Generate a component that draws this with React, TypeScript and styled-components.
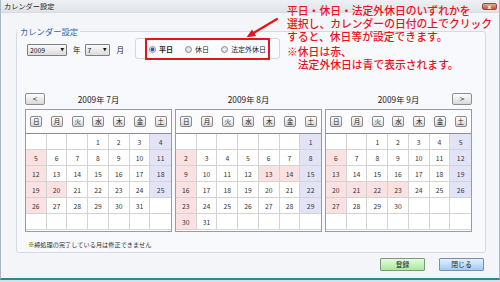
import React from "react";
import styled, { createGlobalStyle } from "styled-components";

const GlobalStyle = createGlobalStyle`
  html, body {
    margin: 0;
    padding: 0;
  }
  body {
    width: 500px;
    height: 282px;
    overflow: hidden;
    background: #d6dfe7;
    font-family: "Noto Sans CJK JP", "Noto Sans", sans-serif;
    color: #222;
  }
`;

type DayKind = "normal" | "holiday" | "saturday";

interface ICell {
  day?: number;
  kind: DayKind;
}

interface IMonth {
  label: string;
  startDow: number;
  days: number;
  holidays: number[];
}

const MONTHS: IMonth[] = [
  { label: "2009年 7月", startDow: 3, days: 31, holidays: [20] },
  { label: "2009年 8月", startDow: 6, days: 31, holidays: [13, 14] },
  { label: "2009年 9月", startDow: 2, days: 30, holidays: [21, 22, 23] },
];

const WEEKDAYS = ["日", "月", "火", "水", "木", "金", "土"];

const buildCells = (month: IMonth): ICell[] => {
  const cells: ICell[] = [];
  for (let i = 0; i < 42; i++) {
    const day = i - month.startDow + 1;
    if (day < 1 || day > month.days) {
      cells.push({ kind: "normal" });
      continue;
    }
    const dow = i % 7;
    let kind: DayKind = "normal";
    if (dow === 0 || month.holidays.includes(day)) kind = "holiday";
    else if (dow === 6) kind = "saturday";
    cells.push({ day, kind });
  }
  return cells;
};

const Calendar = ({ month, prev, next }: { month: IMonth; prev?: boolean; next?: boolean }) => (
  <MonthColumn>
    <MonthNav>
      {prev && <NavButton $side="left">&lt;</NavButton>}
      <MonthTitle>{month.label}</MonthTitle>
      {next && <NavButton $side="right">&gt;</NavButton>}
    </MonthNav>
    <CalendarBox>
      <WeekHeader>
        {WEEKDAYS.map((w) => (
          <WeekSlot key={w}>
            <WeekButton>{w}</WeekButton>
          </WeekSlot>
        ))}
      </WeekHeader>
      <DayGrid>
        {buildCells(month).map((c, i) => (
          <DayCell key={i} $kind={c.day ? c.kind : "normal"} $last={i % 7 === 6}>
            {c.day ?? ""}
          </DayCell>
        ))}
      </DayGrid>
    </CalendarBox>
  </MonthColumn>
);

export default function App() {
  return (
    <>
      <GlobalStyle />
      <Window>
        <TitleBar>
          <TitleText>カレンダー設定</TitleText>
          <CloseButton>x</CloseButton>
        </TitleBar>
        <Body>
          <GroupBox>
            <GroupLegend>カレンダー設定</GroupLegend>
            <ControlsRow>
              <SelectBox $width={40}>
                <span>2009</span>
                <SelectArrow>▼</SelectArrow>
              </SelectBox>
              <UnitLabel $gap={6}>年</UnitLabel>
              <SelectBox $width={25} $gap={4}>
                <span>7</span>
                <SelectArrow>▼</SelectArrow>
              </SelectBox>
              <UnitLabel $gap={7}>月</UnitLabel>
              <RadioPanel>
                <RadioGroup>
                  <RadioItem>
                    <RadioDot $checked />
                    <RadioLabel $checked>平日</RadioLabel>
                  </RadioItem>
                  <RadioItem>
                    <RadioDot />
                    <RadioLabel>休日</RadioLabel>
                  </RadioItem>
                  <RadioItem>
                    <RadioDot />
                    <RadioLabel>法定外休日</RadioLabel>
                  </RadioItem>
                </RadioGroup>
              </RadioPanel>
            </ControlsRow>
            <CalendarRow>
              {MONTHS.map((m, i) => (
                <Calendar key={m.label} month={m} prev={i === 0} next={i === MONTHS.length - 1} />
              ))}
            </CalendarRow>
            <Note>※締処理の完了している月は修正できません</Note>
          </GroupBox>
          <Footer>
            <FooterButton $tone="green">登録</FooterButton>
            <FooterButton $tone="blue">閉じる</FooterButton>
          </Footer>
        </Body>

        <Arrow width="42" height="28" viewBox="0 0 42 28">
          <line x1="36" y1="5" x2="12.5" y2="19" stroke="#e8141c" strokeWidth="2.2" strokeLinecap="round" />
          <polygon points="5.5,23.3 15,22 11,15.4" fill="#e8141c" />
        </Arrow>
        <Annotation>
          <AnnoLine>平日・休日・法定外休日のいずれかを</AnnoLine>
          <AnnoLine>選択し、カレンダーの日付の上でクリック</AnnoLine>
          <AnnoLine>すると、休日等が設定できます。</AnnoLine>
          <AnnoLine $gapTop>※休日は赤、</AnnoLine>
          <AnnoLine>　法定外休日は青で表示されます。</AnnoLine>
        </Annotation>
      </Window>
    </>
  );
}

const Window = styled.div`
  position: relative;
  width: 500px;
  height: 280px;
  box-sizing: border-box;
  display: flex;
  flex-direction: column;
  background: #f4f5f9;
  border-left: 1px solid #a9b9c8;
  border-right: 1px solid #a9b9c8;
  border-bottom: 2px solid #2f8797;
`;

const TitleBar = styled.div`
  height: 13px;
  flex: none;
  display: flex;
  align-items: center;
  justify-content: space-between;
  padding: 0 2px 0 3px;
  background: linear-gradient(#eef0f3, #e0e3e8);
  border-bottom: 1px solid #d8dbe0;
  box-sizing: border-box;
`;

const TitleText = styled.span`
  font-size: 7.2px;
  line-height: 9px;
  color: #1e1e1e;
`;

const CloseButton = styled.span`
  width: 15px;
  height: 7px;
  box-sizing: border-box;
  border: 1px solid #9a4a40;
  border-radius: 2px;
  background: linear-gradient(#eba596, #c5503c);
  color: #fff;
  font-family: "DejaVu Sans", sans-serif;
  font-size: 6px;
  line-height: 5px;
  text-align: center;
  font-weight: bold;
`;

const Body = styled.div`
  flex: 1;
  display: flex;
  flex-direction: column;
  padding: 12px 13px 0 15px;
`;

const GroupBox = styled.fieldset`
  margin: 0;
  min-width: 0;
  padding: 1px 12px 3px 8px;
  border: 1px solid #d5d9e1;
  border-radius: 3px;
  background: #f8f9fc;
`;

const GroupLegend = styled.legend`
  margin-left: -7px;
  padding: 0 2px;
  font-size: 8.3px;
  line-height: 12px;
  color: #2f62b4;
`;

const ControlsRow = styled.div`
  display: flex;
  align-items: center;
  height: 21px;
  padding-left: 2px;
`;

const SelectBox = styled.div<{ $width: number; $gap?: number }>`
  width: ${(p) => p.$width}px;
  height: 12px;
  margin-top: 3px;
  margin-left: ${(p) => p.$gap ?? 0}px;
  box-sizing: border-box;
  display: flex;
  align-items: center;
  justify-content: space-between;
  padding: 0 2px 0 2px;
  border: 1px solid #7d7d7d;
  border-radius: 1px;
  background: linear-gradient(#fafafa, #dcdcdc);
  font-size: 6.8px;
  line-height: 10px;
  color: #111;
`;

const SelectArrow = styled.span`
  font-family: "DejaVu Sans", sans-serif;
  font-size: 4.5px;
  color: #111;
`;

const UnitLabel = styled.span<{ $gap: number }>`
  margin-left: ${(p) => p.$gap}px;
  margin-top: 2px;
  font-size: 7.5px;
  line-height: 10px;
  color: #222;
`;

const RadioPanel = styled.div`
  margin-left: 11px;
  width: 145px;
  height: 21px;
  box-sizing: border-box;
  display: flex;
  padding-left: 9px;
  border: 1px solid #d3d7de;
  border-radius: 3px;
  background: #fafbfd;
`;

const RadioGroup = styled.div`
  display: flex;
  align-items: center;
  gap: 12px;
  margin: -1px 0 -2px;
  padding: 0 2px;
  border: 2px solid #e8141c;
`;

const RadioItem = styled.label`
  display: flex;
  align-items: center;
  gap: 3px;
`;

const RadioDot = styled.span<{ $checked?: boolean }>`
  width: 7px;
  height: 7px;
  box-sizing: border-box;
  border-radius: 50%;
  border: 1px solid #8c8c8c;
  background: ${(p) =>
    p.$checked
      ? "radial-gradient(circle, #2a5fbf 0, #2a5fbf 1.6px, #e9eef6 2.2px)"
      : "radial-gradient(circle, #f4f4f4, #cfcfcf)"};
`;

const RadioLabel = styled.span<{ $checked?: boolean }>`
  font-size: 7px;
  line-height: 10px;
  font-weight: ${(p) => (p.$checked ? 700 : 400)};
  color: #1a1a1a;
`;

const CalendarRow = styled.div`
  margin-top: 34px;
  display: grid;
  grid-template-columns: repeat(3, 147px);
  column-gap: 3px;
`;

const MonthColumn = styled.div`
  display: flex;
  flex-direction: column;
`;

const MonthNav = styled.div`
  height: 12px;
  display: grid;
  grid-template-columns: 20px 1fr 20px;
  align-items: center;
`;

const MonthTitle = styled.span`
  grid-column: 2;
  text-align: center;
  font-size: 8.3px;
  line-height: 12px;
  color: #222;
`;

const NavButton = styled.span<{ $side: "left" | "right" }>`
  grid-column: ${(p) => (p.$side === "left" ? 1 : 3)};
  grid-row: 1;
  height: 12px;
  box-sizing: border-box;
  border: 1px solid #8e8e8e;
  border-radius: 2px;
  background: linear-gradient(#fdfdfd, #d9d9d9);
  font-family: "DejaVu Sans", sans-serif;
  font-size: 6.5px;
  line-height: 10px;
  text-align: center;
  color: #222;
`;

const CalendarBox = styled.div`
  margin-top: 4px;
  border: 1px solid #9b9b9b;
  padding-bottom: 1px;
  background: #fff;
`;

const WeekHeader = styled.div`
  height: 23px;
  display: grid;
  grid-template-columns: repeat(7, 1fr);
  align-items: center;
  border-bottom: 1px solid #8d8d8d;
  background: #fbfbfd;
`;

const WeekSlot = styled.div`
  display: flex;
  justify-content: center;
`;

const WeekButton = styled.span`
  width: 12px;
  height: 11px;
  box-sizing: border-box;
  border: 1px solid #8a8a8a;
  border-radius: 2px;
  background: linear-gradient(#ffffff, #d6d6d6);
  font-size: 6.5px;
  line-height: 9px;
  text-align: center;
  color: #222;
`;

const DayGrid = styled.div`
  display: grid;
  grid-template-columns: repeat(7, 1fr);
  grid-auto-rows: 16px;
`;

const CELL_BG: Record<DayKind, string> = {
  normal: "#ffffff",
  holiday: "#fbe1e1",
  saturday: "#e3e3f7",
};

const DayCell = styled.div<{ $kind: DayKind; $last: boolean }>`
  display: flex;
  align-items: center;
  justify-content: center;
  box-sizing: border-box;
  border-bottom: 1px solid #d3d3d3;
  border-right: ${(p) => (p.$last ? "none" : "1px solid #d3d3d3")};
  background: ${(p) => CELL_BG[p.$kind]};
  font-size: 6.8px;
  color: #333;
`;

const Note = styled.div`
  margin-top: 8px;
  padding-left: 3px;
  font-size: 6.2px;
  line-height: 9px;
  color: #333;
`;

const Footer = styled.div`
  display: flex;
  justify-content: flex-end;
  gap: 14px;
  margin-top: 5px;
  padding-right: 2px;
`;

const FooterButton = styled.span<{ $tone: "green" | "blue" }>`
  width: 45px;
  height: 13px;
  box-sizing: border-box;
  border: 1px solid ${(p) => (p.$tone === "green" ? "#7a9a7a" : "#7b8fa8")};
  border-radius: 1px;
  background: ${(p) =>
    p.$tone === "green"
      ? "linear-gradient(#e6fadf, #a9e99a)"
      : "linear-gradient(#e2f0ff, #9fcbf4)"};
  font-size: 6.8px;
  line-height: 11px;
  text-align: center;
  color: #222;
`;

const Arrow = styled.svg`
  position: absolute;
  left: 240px;
  top: 14px;
  overflow: visible;
`;

const Annotation = styled.div`
  position: absolute;
  left: 286px;
  top: 4px;
  display: flex;
  flex-direction: column;
  color: #e8141c;
  font-size: 10.8px;
  font-weight: 500;
  line-height: 13px;
  white-space: nowrap;
`;

const AnnoLine = styled.div<{ $gapTop?: boolean }>`
  margin-top: ${(p) => (p.$gapTop ? "2px" : "0")};
`;
